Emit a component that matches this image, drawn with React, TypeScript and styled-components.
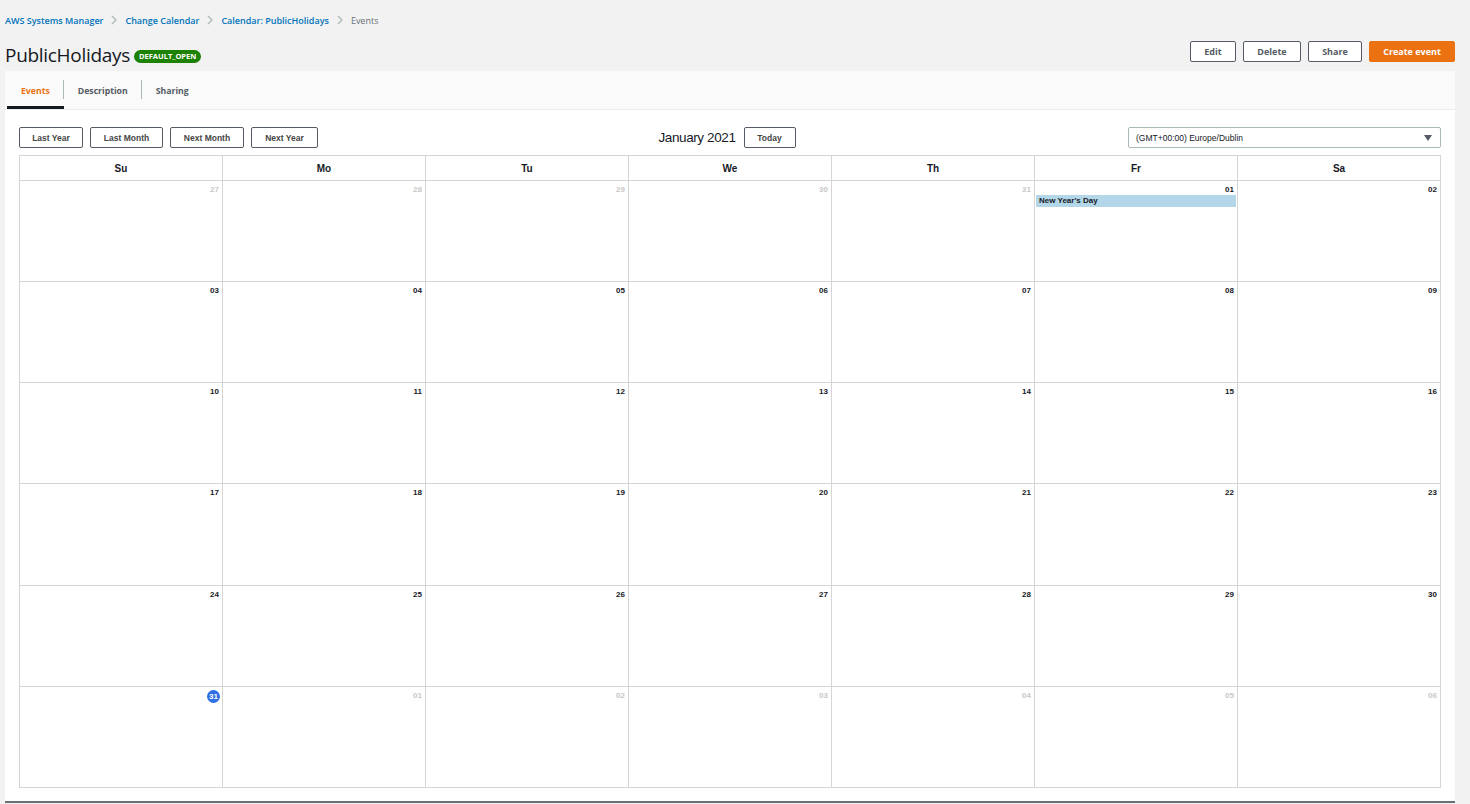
import React from "react";
import styled, { createGlobalStyle } from "styled-components";

const GlobalStyle = createGlobalStyle`
  html, body {
    margin: 0;
    padding: 0;
    background: #f2f2f2;
    font-family: "Open Sans", "Noto Sans", Arial, sans-serif;
    color: #16191f;
  }
  * { box-sizing: border-box; }
`;

const Page = styled.div`
  width: 1470px;
  height: 804px;
  padding: 0 15px 0 5px;
  display: flex;
  flex-direction: column;
`;

const Crumbs = styled.nav`
  display: flex;
  align-items: center;
  height: 39px;
  padding-top: 1px;
  gap: 8px;
  font-size: 9px;
  font-weight: 600;
`;

const Crumb = styled.span<{ $current?: boolean }>`
  color: ${(p) => (p.$current ? "#687078" : "#0073bb")};
  font-weight: ${(p) => (p.$current ? 400 : 600)};
`;

const Sep = () => (
  <svg width="6" height="10" viewBox="0 0 6 10">
    <path d="M1 1l4 4-4 4" fill="none" stroke="#aab7b8" strokeWidth="1.2" />
  </svg>
);

const HeaderRow = styled.div`
  display: flex;
  align-items: center;
  justify-content: space-between;
  height: 32px;
`;

const TitleBox = styled.div`
  display: flex;
  align-items: center;
  gap: 4px;
`;

const Title = styled.h1`
  margin: 0;
  font-size: 19px;
  font-weight: 400;
  letter-spacing: -0.3px;
  color: #16191f;
`;

const Badge = styled.span`
  background: #1d8102;
  color: #fff;
  font-size: 7.5px;
  font-weight: 700;
  border-radius: 8px;
  padding: 1px 5px;
  line-height: 11px;
  margin-top: 3px;
`;

const Actions = styled.div`
  display: flex;
  gap: 7px;
  align-self: flex-start;
  margin-top: 2px;
`;

const ActionButton = styled.button<{ $primary?: boolean; $w: number }>`
  width: ${(p) => p.$w}px;
  height: 21px;
  padding: 0;
  border: 1px solid ${(p) => (p.$primary ? "#ec7211" : "#545b64")};
  background: ${(p) => (p.$primary ? "#ec7211" : "#fff")};
  color: ${(p) => (p.$primary ? "#fff" : "#545b64")};
  border-radius: 2px;
  font-family: "Open Sans", "Noto Sans", Arial, sans-serif;
  font-size: 9px;
  font-weight: 700;
`;

const Panel = styled.section`
  width: 1450px;
  flex: 1;
  display: flex;
  flex-direction: column;
  border-bottom: 2px solid #687078;
  margin-bottom: 1px;
`;

const Tabs = styled.div`
  height: 39px;
  background: #fafafa;
  border-bottom: 1px solid #eaeded;
  display: flex;
  align-items: stretch;
  padding-left: 2px;
`;

const Tab = styled.div<{ $active?: boolean; $divider?: boolean }>`
  position: relative;
  display: flex;
  align-items: center;
  padding: 5px 14px 0 14px;
  font-size: 8.7px;
  font-weight: 700;
  color: ${(p) => (p.$active ? "#ec7211" : "#545b64")};
  border-bottom: 3px solid ${(p) => (p.$active ? "#16191f" : "transparent")};
  &::after {
    content: "";
    display: ${(p) => (p.$divider ? "block" : "none")};
    position: absolute;
    right: 0;
    top: 9px;
    bottom: 7px;
    width: 1px;
    background: #aab7b8;
  }
`;

const Body = styled.div`
  flex: 1;
  background: #fff;
  padding: 17px 14px 13px 14px;
  display: flex;
  flex-direction: column;
  gap: 7px;
  font-family: "Liberation Sans", Arial, sans-serif;
`;

const Toolbar = styled.div`
  display: grid;
  grid-template-columns: 1fr auto 1fr;
  align-items: center;
  height: 21px;
`;

const NavGroup = styled.div`
  display: flex;
  gap: 7px;
`;

const CalButton = styled.button<{ $w: number }>`
  width: ${(p) => p.$w}px;
  height: 21px;
  background: #fff;
  border: 1px solid #545b64;
  border-radius: 2px;
  font-family: "Liberation Sans", Arial, sans-serif;
  font-size: 8.5px;
  font-weight: 700;
  color: #444;
  padding: 0;
`;

const MonthBox = styled.div`
  display: flex;
  align-items: center;
  gap: 8px;
  margin-left: -6px;
`;

const MonthTitle = styled.span`
  font-size: 13.5px;
  letter-spacing: -0.4px;
  color: #16191f;
`;

const SelectWrap = styled.div`
  justify-self: end;
  width: 313px;
  height: 21px;
  border: 1px solid #aab7b8;
  border-radius: 2px;
  display: flex;
  align-items: center;
  justify-content: space-between;
  padding: 0 8px 0 7px;
  font-size: 8.5px;
  color: #16191f;
`;

const Grid = styled.div`
  display: grid;
  grid-template-columns: repeat(7, 1fr);
  grid-template-rows: 25px repeat(6, 1fr);
  flex: 1;
  border-top: 1px solid #d5d5d5;
  border-left: 1px solid #d5d5d5;
`;

const DayName = styled.div`
  display: flex;
  align-items: center;
  justify-content: center;
  border-right: 1px solid #d5d5d5;
  border-bottom: 1px solid #d5d5d5;
  font-size: 10px;
  font-weight: 700;
  color: #16191f;
`;

const Cell = styled.div`
  border-right: 1px solid #d5d5d5;
  border-bottom: 1px solid #d5d5d5;
  display: flex;
  flex-direction: column;
  align-items: stretch;
  padding: 3px 0 0 0;
`;

const DayNum = styled.span<{ $muted?: boolean }>`
  align-self: flex-end;
  margin-right: 3px;
  font-size: 8px;
  font-weight: 700;
  line-height: 12px;
  color: ${(p) => (p.$muted ? "#c8c8c8" : "#16191f")};
`;

const TodayNum = styled.span`
  align-self: flex-end;
  margin-right: 2px;
  width: 13px;
  height: 13px;
  border-radius: 50%;
  background: #2f6fe6;
  color: #fff;
  font-size: 8px;
  font-weight: 700;
  display: flex;
  align-items: center;
  justify-content: center;
`;

const Event = styled.div`
  margin: -1px 1px 0 1px;
  background: #b3d7e8;
  height: 12px;
  padding-left: 3px;
  font-size: 8px;
  font-weight: 700;
  line-height: 12px;
  color: #16191f;
`;

const days = ["Su", "Mo", "Tu", "We", "Th", "Fr", "Sa"];

type Day = { n: string; muted?: boolean; today?: boolean; event?: string };

const buildDays = (): Day[] => {
  const list: Day[] = [];
  [27, 28, 29, 30, 31].forEach((d) => list.push({ n: String(d), muted: true }));
  for (let d = 1; d <= 31; d++) {
    list.push({
      n: String(d).padStart(2, "0"),
      today: d === 31,
      event: d === 1 ? "New Year's Day" : undefined,
    });
  }
  for (let d = 1; d <= 6; d++) list.push({ n: "0" + d, muted: true });
  return list;
};

export default function App() {
  const cells = buildDays();
  return (
    <>
      <GlobalStyle />
      <Page>
        <Crumbs>
          <Crumb>AWS Systems Manager</Crumb>
          <Sep />
          <Crumb>Change Calendar</Crumb>
          <Sep />
          <Crumb>Calendar: PublicHolidays</Crumb>
          <Sep />
          <Crumb $current>Events</Crumb>
        </Crumbs>
        <HeaderRow>
          <TitleBox>
            <Title>PublicHolidays</Title>
            <Badge>DEFAULT_OPEN</Badge>
          </TitleBox>
          <Actions>
            <ActionButton $w={46}>Edit</ActionButton>
            <ActionButton $w={58}>Delete</ActionButton>
            <ActionButton $w={54}>Share</ActionButton>
            <ActionButton $w={86} $primary>Create event</ActionButton>
          </Actions>
        </HeaderRow>
        <Panel>
          <Tabs>
            <Tab $active $divider>Events</Tab>
            <Tab $divider>Description</Tab>
            <Tab>Sharing</Tab>
          </Tabs>
          <Body>
            <Toolbar>
              <NavGroup>
                <CalButton $w={64}>Last Year</CalButton>
                <CalButton $w={73}>Last Month</CalButton>
                <CalButton $w={74}>Next Month</CalButton>
                <CalButton $w={67}>Next Year</CalButton>
              </NavGroup>
              <MonthBox>
                <MonthTitle>January 2021</MonthTitle>
                <CalButton $w={52}>Today</CalButton>
              </MonthBox>
              <SelectWrap>
                <span>(GMT+00:00) Europe/Dublin</span>
                <svg width="8" height="6" viewBox="0 0 8 6">
                  <path d="M0 0h8L4 6z" fill="#545b64" />
                </svg>
              </SelectWrap>
            </Toolbar>
            <Grid>
              {days.map((d) => (
                <DayName key={d}>{d}</DayName>
              ))}
              {cells.map((c, i) => (
                <Cell key={i}>
                  {c.today ? (
                    <TodayNum>{c.n}</TodayNum>
                  ) : (
                    <DayNum $muted={c.muted}>{c.n}</DayNum>
                  )}
                  {c.event && <Event>{c.event}</Event>}
                </Cell>
              ))}
            </Grid>
          </Body>
        </Panel>
      </Page>
    </>
  );
}
